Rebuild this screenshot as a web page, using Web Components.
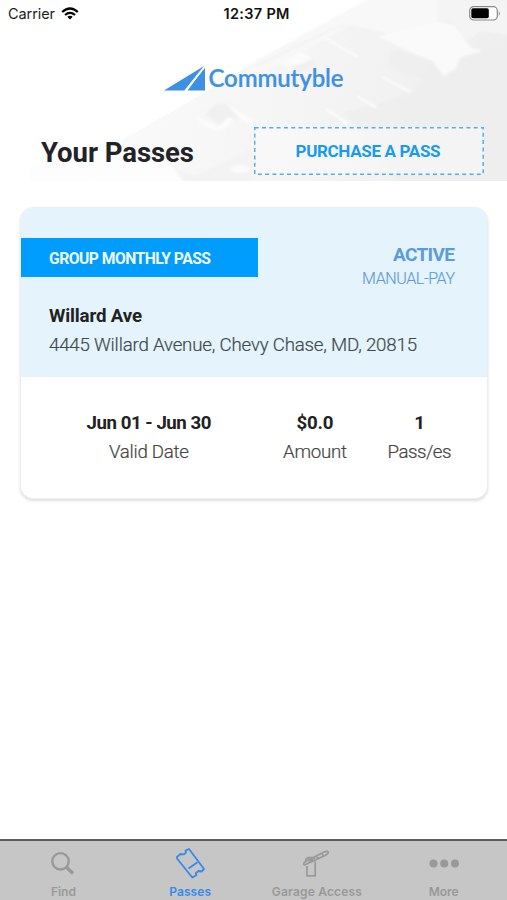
<!DOCTYPE html>
<html lang="en"><head><meta charset="utf-8"><title>Commutyble</title>
<style>html,body{margin:0;height:100%}body{background:#fff;font-family:Roboto,"Liberation Sans",sans-serif;overflow:hidden}</style></head>
<body>
<pass-app></pass-app>
<script>
const define=(name,html)=>customElements.define(name,class extends HTMLElement{
  constructor(){super();const t=document.createElement('template');t.innerHTML=html;this.attachShadow({mode:'open'}).append(t.content.cloneNode(true));}
});

/* A text line whose tracking is adjusted to fill the width given in its w attribute. */
customElements.define('fit-text',class extends HTMLElement{
  constructor(){super();this.attachShadow({mode:'open'}).innerHTML='<style>:host{display:block;white-space:nowrap;width:max-content}span{display:inline-block}</style><span><slot></slot></span>';}
  connectedCallback(){
    const s=this.shadowRoot.querySelector('span'),w=+this.getAttribute('w'),n=this.textContent.length;
    if(!w)return;
    const d=(w-s.getBoundingClientRect().width)/Math.max(1,n-1);
    s.style.letterSpacing=d+'px';s.style.marginRight=-d+'px';
  }
});

define('status-bar',`<style>
:host{display:grid;grid-template-columns:1fr auto 1fr;align-items:center;height:28px;padding:0 4px 0 10px;box-sizing:border-box;font:14.5px/28px Inter,sans-serif;color:#1c1c1c}
.l{display:flex;align-items:center;gap:6px;margin-left:-2px}.t{font-weight:600;color:#111}.b{justify-self:end;display:block;margin-right:2px}svg{display:block;margin-top:-2px}
</style><div class="l"><fit-text w="47">Carrier</fit-text>
<svg width="18" height="13" viewBox="0 0 18 13" fill="none" stroke="#000" stroke-width="2.3"><path d="M1.2 5Q9-2 16.8 5M4 8Q9 3.700 14 8"/><path d="M9 12.500L6.300 9.700Q9 7.600 11.700 9.700Z" fill="#000" stroke="none"/></svg></div>
<fit-text class="t" w="66">12:37 PM</fit-text>
<svg class="b" width="32" height="15" viewBox="0 0 32 15"><rect x=".7" y=".7" width="27.600" height="13.300" rx="4" fill="#fff" stroke="#888" stroke-width="1.200"/><rect x="2.300" y="2.300" width="17.500" height="10" rx="1.800"/><path d="M29.800 5v5q2-2.500 0-5Z" fill="#888"/></svg>`);

define('garage-backdrop',`<style>:host{display:block}svg{display:block;width:100%;height:100%}</style>
<svg viewBox="0 0 507 181" preserveAspectRatio="none">
<defs><linearGradient id="g" gradientUnits="userSpaceOnUse" x1="60" y1="0" x2="500" y2="110"><stop offset="0" stop-color="#fefefe"/><stop offset=".3" stop-color="#f8f8f8"/><stop offset=".6" stop-color="#f4f4f4"/><stop offset="1" stop-color="#eeeeee"/></linearGradient>
<filter id="s"><feGaussianBlur stdDeviation=".8"/></filter></defs>
<path d="M43 181L118 142L180 107L253 63L370 0H507V181Z" fill="url(#g)"/>
<g filter="url(#s)">
<path d="M253 62L370 -2H438L437 22L398 35L350 25L280 65L246 76Z" fill="#f8f8f8"/>
<path d="M377 36L440 21L455 26L471 48L483 51L460 57L456 69L443 76L434 63Z" fill="#fafafa"/>
<path d="M438 0H507V35L480 31L468 41L450 21L437 20Z" fill="#f4f4f4"/>
<path d="M389 53L399 50L433 61L433 72L424 80L389 66Z" fill="#efefef"/>
<path d="M433 61L443 76L456 69L463 57L507 43V181H395L345 112L376 105L410 93L421 82Z" fill="#eeeeee" opacity=".8"/>
<path d="M205 114L216 104L227 104L239 118L222 127Z" fill="#f0f0f0"/>
<path d="M227 104L253 120V126L238 117Z" fill="#fcfcfc"/>
<path d="M193 115L201 119L218 127L228 117L235 119L224 130L216 131L201 124Z" fill="#fcfcfc"/>
<path d="M282 64L300 52L312 57L293 72Z" fill="#fbfbfb"/><path d="M290 67L314 60L316 64L298 73Z" fill="#f0f0f0"/>
<path d="M325 38L358 57M382 77L411 92M357 96L377 108M326 109L348 124" stroke="#fcfcfc" stroke-width="2.500"/>
<path d="M256 66L335 28L345 25" fill="none" stroke="#f1f1f1" stroke-width="1.500"/>
<path d="M174 168L195 176L253 148V181H174Z" fill="#f3f3f3"/>
<ellipse cx="240" cy="169" rx="10" ry="4" fill="#fafafa"/>
<path d="M30 185V165L118 141L174 168L186 185Z" fill="#fdfdfd"/>
</g></svg>`);

define('brand-logo',`<style>:host{display:flex;justify-content:center;height:34px;gap:3px}svg{display:block;margin-top:4px}fit-text{font:600 24px/34px Lato,sans-serif;-webkit-text-stroke:.2px #3d90e3;color:#3d90e3;margin-top:-1px}</style>
<svg width="42" height="26" viewBox="0 0 42 26" fill="#3d90e3"><path d="M0 24.500L40 0L20.300 24.500Z"/><path d="M23.500 24.500L41 1V24.500Z"/><path d="M21.800 24.500L40.500 1" stroke="#fcfcfc" stroke-width="1.700"/></svg>
<fit-text w="135">Commutyble</fit-text>`);

define('purchase-button',`<style>:host{display:block}button{all:unset;box-sizing:border-box;width:230px;height:48px;position:relative;display:flex;justify-content:center;align-items:center;background:rgba(249,250,251,.55);color:#169bf5;font-size:17px;font-weight:700;cursor:pointer}svg{position:absolute;inset:0}fit-text{margin-left:-2px}</style>
<button><svg width="230" height="48" fill="none"><rect x=".7" y=".7" width="228.500" height="46.500" stroke="#4eafed" stroke-width="1.500" stroke-dasharray="4 3.300"/></svg><fit-text w="145">PURCHASE A PASS</fit-text></button>`);

define('page-header',`<style>
:host{display:block;position:relative;height:181px}
garage-backdrop{position:absolute;inset:0;z-index:-1}
brand-logo{margin-top:34px}
.row{display:flex;justify-content:space-between;align-items:center;padding:0 23px 0 41px;margin-top:31px}
h1{margin:4px 0 0;font-size:27.5px;line-height:34px;font-weight:700;color:#232327}
</style><garage-backdrop></garage-backdrop><status-bar></status-bar><brand-logo></brand-logo>
<div class="row"><h1><fit-text w="153">Your Passes</fit-text></h1><purchase-button></purchase-button></div>`);

define('pass-stat',`<style>:host{display:flex;flex-direction:column;align-items:center;color:#444}.v{font-weight:700;color:#222}</style>
<div class="v"><slot name="value"></slot></div><slot></slot>`);

define('pass-card',`<style>
:host{display:block;margin:26px 19px 0 20px;height:292px;box-sizing:border-box;border:1px solid #eceff1;border-radius:13px;overflow:hidden;box-shadow:0 2px 3px rgba(0,0,0,.13);background:#fff}
.top{height:169px;background:#e5f3fd;box-sizing:border-box;padding-top:30px}
.head{display:flex;justify-content:space-between;align-items:flex-start;padding-right:32px;height:52px}
.tag{width:237px;height:39px;background:#009dff;color:#effaff;box-sizing:border-box;padding-left:28px;font-weight:700;font-size:15.700px;line-height:41px}
.status{display:flex;flex-direction:column;align-items:flex-end;margin-top:5px;color:#5c9bdc}
.a{font-weight:700;font-size:19px;line-height:24px}.m{font-size:16px;line-height:23px;font-weight:300;-webkit-text-stroke:.15px}
.place{padding:12px 28px 0;font-size:18.700px;line-height:29px;color:#40484d}.name{font-weight:700;color:#222}
.stats{display:grid;grid-template-columns:256px 76px 133px;padding-top:32px;font-size:18.700px;line-height:29px}
.lt{font-weight:300;-webkit-text-stroke:.2px}
</style><div class="top"><div class="head"><div class="tag"><fit-text w="162">GROUP MONTHLY PASS</fit-text></div><div class="status"><fit-text class="a" w="62">ACTIVE</fit-text><fit-text class="m" w="93">MANUAL-PAY</fit-text></div></div>
<div class="place"><fit-text class="name" w="93">Willard Ave</fit-text><fit-text class="lt" w="368">4445 Willard Avenue, Chevy Chase, MD, 20815</fit-text></div></div>
<div class="stats">
<pass-stat><fit-text slot="value" w="125">Jun 01 - Jun 30</fit-text><fit-text class="lt" w="80">Valid Date</fit-text></pass-stat>
<pass-stat><fit-text slot="value" w="37">$0.0</fit-text><fit-text class="lt" w="64">Amount</fit-text></pass-stat>
<pass-stat><fit-text slot="value">1</fit-text><fit-text class="lt" w="64">Pass/es</fit-text></pass-stat>
</div>`);

define('tab-item',`<style>:host{display:flex;flex-direction:column;align-items:center;color:#999;font:600 12px/16px Inter,sans-serif}:host([active]){color:#3589ed}.i{height:34px;margin-top:6px;margin-bottom:3px}</style><div class="i"><slot name="icon"></slot></div><slot></slot>`);

define('tab-bar',`<style>:host{display:grid;grid-template-columns:repeat(4,1fr);height:61px;box-sizing:border-box;border-top:2px solid #5c5c5c;background:#c6c6c6}svg{display:block;fill:none;stroke:currentColor;stroke-linejoin:round}</style>
<tab-item><svg slot="icon" width="34" height="34" viewBox="0 0 34 34" stroke-width="2.400"><circle cx="14.500" cy="14.300" r="8.200"/><path d="M20.500 20.300L27 26.500" stroke-width="3.400"/></svg><fit-text w="25">Find</fit-text></tab-item>
<tab-item active><svg slot="icon" width="34" height="34" viewBox="0 0 34 34" stroke-width="1.800"><path d="M4 10L7.500 7L11 7.300L13 5.500L12.500 3.500L16 2L31 22L28.500 24.500L25.500 24L22.800 26.200L23.300 28.300L19.300 30.500L4 11.500ZM15.500 21.500L24.500 15.300"/></svg><fit-text w="42">Passes</fit-text></tab-item>
<tab-item><svg slot="icon" width="34" height="34" viewBox="0 0 34 34" stroke-width="1.700"><path d="M7 19V28.800H15.200V14.500M6 15V12L8.500 10.500H13L15 12M4.500 18L26 8Q30 5.500 27 4.300L24.500 4.800L5.500 14.500Q2.500 17 4.500 18ZM10.500 12L13 15M16 9L19 12M21.500 6.300L24 9.500M7.500 17L14 10.500"/></svg><fit-text w="90">Garage Access</fit-text></tab-item>
<tab-item><svg slot="icon" width="34" height="34" viewBox="0 0 34 34" style="fill:currentColor;stroke:none"><circle cx="6.500" cy="16.500" r="4"/><circle cx="17.200" cy="16.500" r="4"/><circle cx="28" cy="16.500" r="4"/></svg><fit-text w="30">More</fit-text></tab-item>`);

define('pass-app',`<style>:host{display:flex;flex-direction:column;height:900px;width:507px;position:relative;z-index:0}main{flex:1}</style>
<page-header></page-header><main><pass-card></pass-card></main><tab-bar></tab-bar>`);
</script></body></html>
